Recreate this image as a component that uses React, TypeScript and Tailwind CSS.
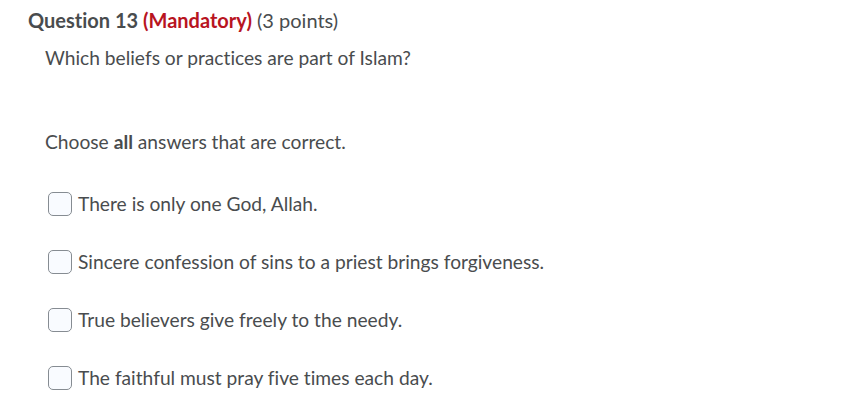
export default function App() {
  const options = [
    "There is only one God, Allah.",
    "Sincere confession of sins to a priest brings forgiveness.",
    "True believers give freely to the needy.",
    "The faithful must pray five times each day.",
  ];
  return (
    <div className="h-[407px] w-[865px] bg-white text-[19.2px] text-[#494c4e] [font-family:Lato,sans-serif] [font-variant-ligatures:none]">
      <div className="pl-[28px] pt-[7px]">
        <h2 className="text-[20px] leading-[26px]">
          <span className="font-bold">Question 13 </span>
          <span className="font-bold text-[#b8141f]">(Mandatory)</span>{" "}
          <span>(3 points)</span>
        </h2>
      </div>
      <div className="pl-[45px]">
        <p className="mt-[12px] leading-[26px]">Which beliefs or practices are part of Islam?</p>
        <p className="mt-[58px] leading-[26px]">
          Choose <b className="font-bold">all</b> answers that are correct.
        </p>
        <div className="mt-[36px] flex flex-col gap-[32px] pl-[3px]">
          {options.map((o) => (
            <label key={o} className="flex h-[26px] items-center gap-[6px]">
              <span className="h-[24px] w-[24px] shrink-0 rounded-[5px] border border-[#868c92] bg-[#f9fbff]" />
              <span className="leading-[26px]">{o}</span>
            </label>
          ))}
        </div>
      </div>
    </div>
  );
}
